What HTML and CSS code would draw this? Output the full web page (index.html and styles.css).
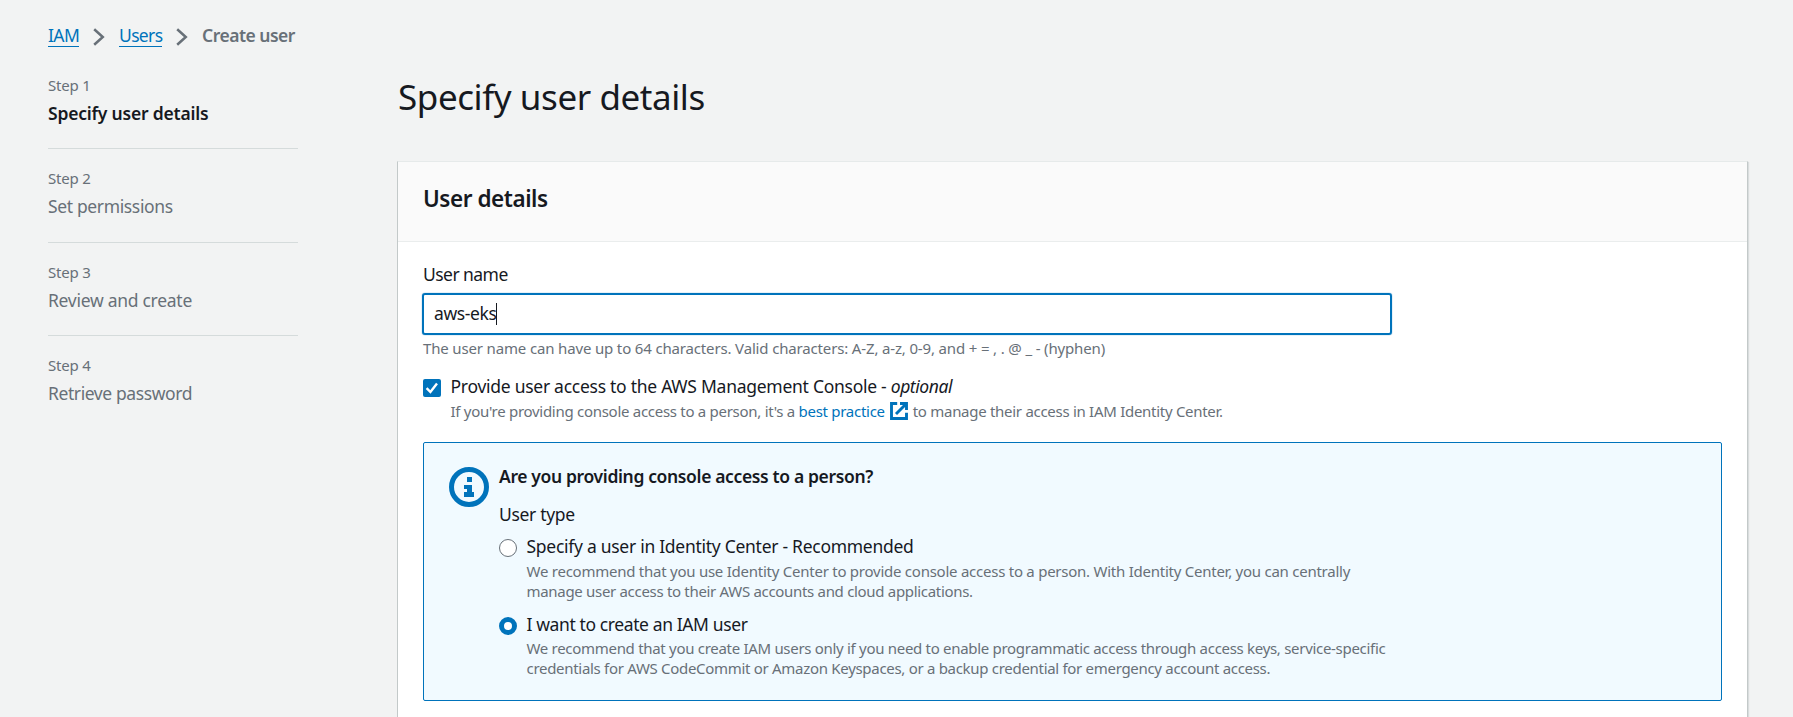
FILE: index.html
```
<!DOCTYPE html>
<html lang="en">
<head>
<meta charset="utf-8">
<title>Create user | IAM</title>
<link rel="stylesheet" href="styles.css">
</head>
<body>
<nav class="breadcrumbs">
  <a class="crumb crumb-iam" href="#">IAM</a>
  <svg class="chevron" viewBox="0 0 12 18"><path d="M1.2 1.2 9.8 9 1.2 16.8"/></svg>
  <a class="crumb crumb-users" href="#">Users</a>
  <svg class="chevron" viewBox="0 0 12 18"><path d="M1.2 1.2 9.8 9 1.2 16.8"/></svg>
  <span class="crumb-current">Create user</span>
</nav>
<div class="layout">
  <ol class="steps">
    <li class="step active"><span class="step-no">Step 1</span><span class="step-name">Specify user details</span></li>
    <li class="step"><span class="step-no">Step 2</span><span class="step-name">Set permissions</span></li>
    <li class="step"><span class="step-no">Step 3</span><span class="step-name review">Review and create</span></li>
    <li class="step"><span class="step-no">Step 4</span><span class="step-name retrieve">Retrieve password</span></li>
  </ol>
  <main class="content">
    <h1 class="page-title">Specify user details</h1>
    <section class="card">
      <header class="card-header"><h2 class="card-title">User details</h2></header>
      <div class="card-body">
        <label class="field-label">User name</label>
        <div class="input"><span class="input-value">aws-eks</span><span class="caret"></span></div>
        <p class="hint">The user name can have up to 64 characters. Valid characters: A-Z, a-z, 0-9, and + = , . @ _ - (hyphen)</p>
        <div class="check-row">
          <svg class="checkbox" viewBox="0 0 18 18"><rect width="18" height="18" rx="2"/><path d="M3.6 9.2 7.4 13 14 4.4"/></svg>
          <div>
            <div class="option-label console-label">Provide user access to the AWS Management Console - <em class="optional">optional</em></div>
            <p class="option-desc console-desc"><span class="desc-lead">If you're providing console access to a person, it's a <a class="link" href="#">best practice</a></span><svg class="external" viewBox="0 0 18 18"><path d="M7.2 1.5H1.5v15h15v-5.7M10 1.5h6.5V8M16 2 6 12"/></svg><span>to manage their access in IAM Identity Center.</span></p>
          </div>
        </div>
        <div class="alert">
          <svg class="info" viewBox="0 0 40 40"><circle cx="20" cy="20" r="17.5"/><path d="M18 10h5v5h-5zM15 18h8v7h2v5H15v-5h3v-3h-3z"/></svg>
          <div class="alert-body">
            <div class="alert-title">Are you providing console access to a person?</div>
            <div class="type-label">User type</div>
            <div class="radio-row">
              <span class="radio"></span>
              <div>
                <div class="option-label">Specify a user in Identity Center - Recommended</div>
                <p class="option-desc identity-desc">We recommend that you use Identity Center to provide console access to a person. With Identity Center, you can centrally<br><span class="second-line">manage user access to their AWS accounts and cloud applications.</span></p>
              </div>
            </div>
            <div class="radio-row second">
              <span class="radio checked"></span>
              <div>
                <div class="option-label iam-label">I want to create an IAM user</div>
                <p class="option-desc iam-desc">We recommend that you create IAM users only if you need to enable programmatic access through access keys, service-specific<br>credentials for AWS CodeCommit or Amazon Keyspaces, or a backup credential for emergency account access.</p>
              </div>
            </div>
          </div>
        </div>
      </div>
    </section>
  </main>
</div>
</body>
</html>
```
FILE: styles.css
```
* { box-sizing: border-box; }
body {
  margin: 0;
  height: 717px;
  overflow: hidden;
  background: #f2f3f3;
  color: #16191f;
  font: 17.5px/28px "Noto Sans", "Open Sans", sans-serif;
}
h1, h2, p, ol { margin: 0; padding: 0; }
svg { display: block; flex: none; fill: none; }

.breadcrumbs { display: flex; align-items: flex-start; padding: 21px 0 0 48px; height: 49px; }
.crumb {
  height: 26px;
  color: #0073bb;
  text-decoration: none;
  border-bottom: 1px solid #0073bb;
}
.crumb-iam { width: 31px; letter-spacing: -0.6px; }
.crumb-users { width: 43px; letter-spacing: -0.65px; }
.chevron { width: 12px; height: 18px; margin: 7px 14px 0; stroke: #687078; stroke-width: 2.5; }
.crumb-current { color: #687078; font-weight: 600; letter-spacing: -0.5px; }

.layout { display: flex; align-items: flex-start; padding-left: 48px; }
.steps { width: 250px; margin: 26px 99px 0 0; list-style: none; }
.step { display: flex; flex-direction: column; gap: 4px; padding-bottom: 21.3px; color: #687078; }
.step + .step { border-top: 1px solid #d5dbdb; padding-top: 19px; }
.step-no { font-size: 15px; line-height: 20px; letter-spacing: -0.2px; }
.step-name { letter-spacing: -0.36px; white-space: nowrap; }
.step-name.review { letter-spacing: -0.28px; }
.step-name.retrieve { letter-spacing: -0.41px; }
.active .step-name { color: #16191f; font-weight: 600; letter-spacing: -0.2px; }

.content { width: 1351px; padding-top: 26px; }
.page-title { padding-left: 1px; margin-bottom: 42px; font-size: 35px; line-height: 44px; font-weight: 400; letter-spacing: -0.43px; }
.card {
  height: 556px;
  background: #fff;
  border: 1px solid #c3c9c9;
  border-top-color: #e6eaea;
  border-bottom: 0;
  box-shadow: 1px 1px 1px rgba(0, 28, 36, 0.1);
}
.card-header { height: 80px; padding: 23px 25px 0; background: #fafafa; border-bottom: 1px solid #eaeded; }
.card-title { font-size: 22.5px; line-height: 28px; font-weight: 600; letter-spacing: -0.45px; }
.card-body { padding: 18px 25px 0; }
.field-label { display: block; letter-spacing: -0.55px; }
.input {
  display: flex;
  align-items: center;
  width: 970px;
  height: 42px;
  margin: 5px 0 0 -1px;
  padding: 0 10px 2px;
  border: 2px solid #0073bb;
  border-radius: 3px;
  box-shadow: 0 0 1px #0073bb;
}
.input-value { letter-spacing: -0.39px; }
.caret { width: 1px; height: 22px; margin-top: 2px; background: #16191f; }
.hint { margin-top: 3px; color: #687078; font-size: 15px; line-height: 20px; letter-spacing: -0.155px; }

.check-row { display: flex; gap: 9.5px; margin-top: 14px; }
.checkbox { width: 18px; height: 18px; margin-top: 7px; }
.checkbox rect { fill: #0073bb; }
.checkbox path { stroke: #fff; stroke-width: 2.4; }
.option-label { letter-spacing: -0.28px; }
.console-label { letter-spacing: -0.27px; }
.optional { letter-spacing: -0.44px; }
.iam-label { letter-spacing: -0.39px; }
.option-desc { margin-top: 1px; color: #687078; font-size: 15px; line-height: 20px; letter-spacing: -0.3px; white-space: nowrap; }
.console-desc { display: flex; letter-spacing: -0.285px; }
.identity-desc { letter-spacing: -0.248px; }
.second-line { letter-spacing: -0.31px; }
.iam-desc { margin-top: 0; }
.link { color: #0073bb; text-decoration: none; }
.external { width: 18px; height: 18px; margin: 1px 5px 0 5px; stroke: #0073bb; stroke-width: 2.9; }

.alert {
  display: flex;
  height: 259px;
  margin-top: 21px;
  padding: 19px 25px 0;
  background: #f1faff;
  border: 1px solid #0073bb;
  border-radius: 2px;
}
.info { width: 40px; height: 40px; margin: 5px 10px 0 0; }
.info circle { stroke: #0073bb; stroke-width: 5; }
.info path { fill: #0073bb; }
.alert-title { font-weight: 600; letter-spacing: -0.36px; }
.type-label { margin-top: 10px; letter-spacing: -0.33px; }
.radio-row { display: flex; gap: 9.5px; margin-top: 4px; }
.radio-row.second { margin-top: 9px; }
.radio { flex: none; width: 18px; height: 18px; margin-top: 6.5px; background: #fff; border: 1px solid #687078; border-radius: 50%; }
.radio.checked { border: 5.5px solid #0073bb; }
```
